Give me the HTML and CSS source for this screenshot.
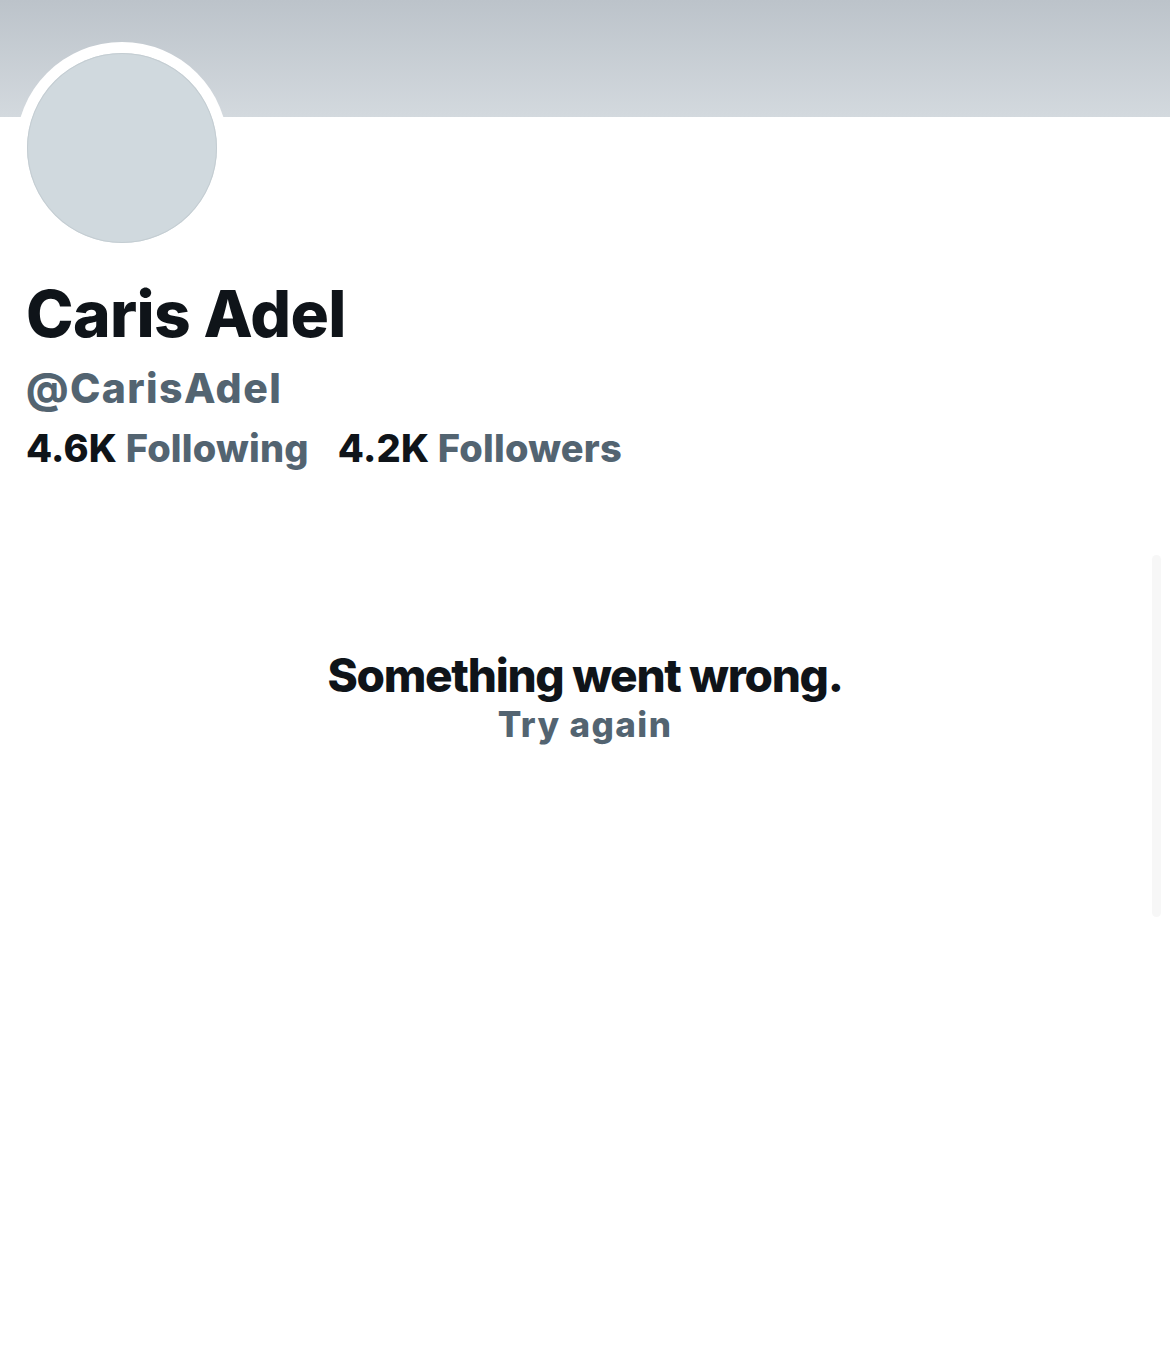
FILE: index.html
```html
<!DOCTYPE html>
<html lang="en">
<head>
<meta charset="utf-8">
<title>Caris Adel</title>
<link rel="stylesheet" href="styles.css">
</head>
<body>
<div class="page">
  <div class="banner"></div>
  <div class="profile">
    <div class="avatar-ring"><div class="avatar"></div></div>
    <h1 class="name">Caris Adel</h1>
    <div class="handle">@CarisAdel</div>
    <div class="stats">
      <a class="stat"><span class="num">4.6K</span> <span class="label">Following</span></a>
      <a class="stat"><span class="num">4.2K</span> <span class="label">Followers</span></a>
    </div>
  </div>
  <div class="error">
    <div class="error-title">Something went wrong.</div>
    <div class="error-retry">Try again</div>
  </div>
  <div class="scrolltrack"></div>
</div>
</body>
</html>
```
FILE: styles.css
```css
html, body {
  margin: 0;
  padding: 0;
  background: #ffffff;
}
body {
  font-family: "Inter", "Roboto", "Liberation Sans", sans-serif;
  color: #0f1419;
}
.page {
  position: relative;
  width: 1170px;
  min-height: 1357px;
}
.banner {
  height: 117px;
  background: linear-gradient(180deg, #bcc3ca 0%, #d3d9de 100%);
}
.profile {
  padding: 0 26px;
}
.avatar-ring {
  width: 212px;
  height: 212px;
  margin: -75px 0 0 -10px;
  border-radius: 50%;
  background: #ffffff;
  display: flex;
  align-items: center;
  justify-content: center;
}
.avatar {
  width: 190px;
  height: 190px;
  border-radius: 50%;
  background: #d0d9de;
  box-shadow: inset 0 0 0 1px #c4cdd2;
}
.name {
  margin: 20px 0 0;
  font-size: 64px;
  font-weight: 800;
  line-height: 80px;
  letter-spacing: -0.6px;
}
.handle {
  margin-top: 10px;
  font-size: 41px;
  font-weight: 800;
  color: #536471;
  line-height: 48px;
  letter-spacing: 1.4px;
}
.stats {
  display: flex;
  gap: 29px;
  margin-top: 14px;
  font-size: 38px;
  font-weight: 800;
  line-height: 44px;
  letter-spacing: 0.2px;
}
.stat .num { color: #0f1419; }
.stat .label { color: #536471; }
.error {
  margin-top: 178px;
  display: flex;
  flex-direction: column;
  align-items: center;
}
.error-title {
  font-size: 46px;
  font-weight: 800;
  line-height: 54px;
  letter-spacing: -1.3px;
}
.error-retry {
  margin-top: 2px;
  font-size: 35px;
  font-weight: 800;
  line-height: 40px;
  letter-spacing: 1.4px;
  color: #536471;
}
.scrolltrack {
  position: absolute;
  left: 1152px;
  top: 555px;
  width: 9px;
  height: 362px;
  border-radius: 5px;
  background: #f7f7f7;
}
```
